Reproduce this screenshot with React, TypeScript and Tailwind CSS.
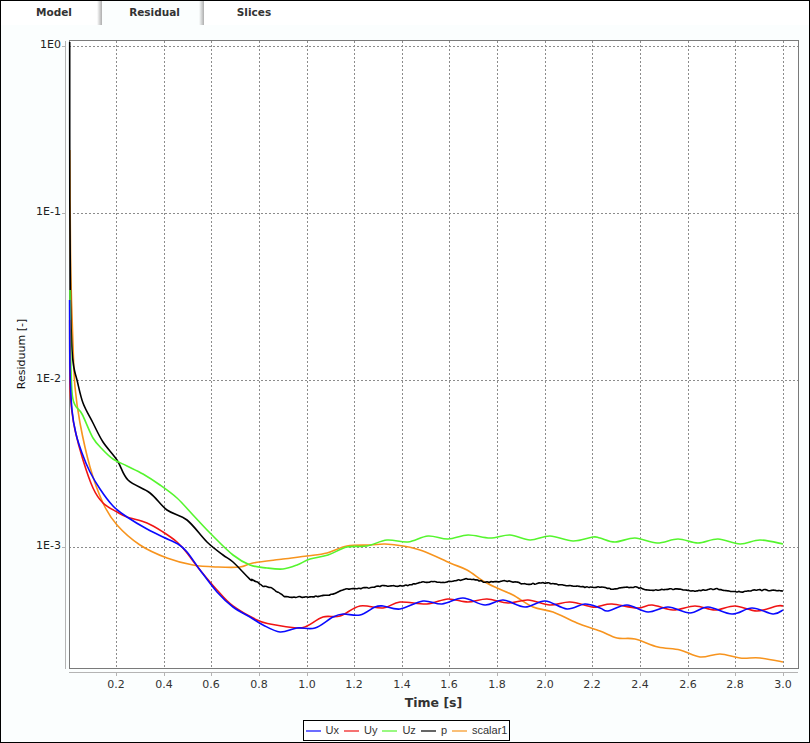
type Pt = [number, number];

// smooth line through the read-off points (catmull-rom to bezier)
function smooth(pts: Pt[]) {
  let d = `M${pts[0][0]} ${pts[0][1]}`;
  for (let i = 0; i < pts.length - 1; i++) {
    const p0 = pts[i - 1] || pts[i];
    const p1 = pts[i];
    const p2 = pts[i + 1];
    const p3 = pts[i + 2] || p2;
    const c1x = p1[0] + (p2[0] - p0[0]) / 6;
    const c1y = p1[1] + (p2[1] - p0[1]) / 6;
    const c2x = p2[0] - (p3[0] - p1[0]) / 6;
    const c2y = p2[1] - (p3[1] - p1[1]) / 6;
    d += `C${c1x.toFixed(1)} ${c1y.toFixed(1)} ${c2x.toFixed(1)} ${c2y.toFixed(1)} ${p2[0]} ${p2[1]}`;
  }
  return d;
}

// the p residual is noisy, so it gets a small fixed jitter
function noisy(pts: Pt[]) {
  const out: Pt[] = [];
  for (let i = 0; i < pts.length - 1; i++) {
    const [x0, y0] = pts[i];
    const [x1, y1] = pts[i + 1];
    if (x0 < 240) {
      out.push([x0, y0]);
      continue;
    }
    const n = Math.max(1, Math.round((x1 - x0) / 2));
    for (let k = 0; k < n; k++) {
      const t = k / n;
      const s = t * t * (3 - 2 * t);
      const j = Math.sin((x0 + k * 2) * 12.9898) * 43758.5453;
      out.push([+(x0 + (x1 - x0) * t).toFixed(1), +(y0 + (y1 - y0) * s + ((j - Math.floor(j)) - 0.5) * 1.1).toFixed(1)]);
    }
  }
  out.push(pts[pts.length - 1]);
  return out;
}

const ux: Pt[] = [[69.6, 300], [70, 370], [72, 410], [76, 434], [82, 453], [90, 472], [100, 489], [113, 506], [127, 517], [147, 529], [163, 537], [178, 544], [187, 552], [200, 570], [217, 592], [233, 607], [250, 617], [263, 625], [280, 632], [297, 628], [315, 628], [333, 617], [343, 614], [360, 615], [375, 607], [383, 606], [400, 609], [423, 601], [442, 604], [463, 598], [485, 605], [503, 600], [525, 607], [545, 601], [567, 609], [585, 604], [600, 608], [608, 611], [627, 605], [648, 612], [668, 607], [690, 613], [708, 607], [732, 614], [752, 608], [773, 614], [783, 610]];
const uy: Pt[] = [[69.7, 320], [70, 387], [72, 412], [75, 430], [83, 460], [93, 488], [103, 503], [117, 512], [127, 517], [147, 523], [163, 532], [177, 542], [187, 553], [200, 570], [217, 590], [233, 606], [257, 620], [270, 624], [297, 628], [307, 626], [323, 617], [340, 616], [360, 606], [383, 608], [400, 602], [427, 604], [448, 599], [468, 602], [487, 599], [508, 603], [528, 600], [550, 605], [570, 602], [592, 607], [600, 606], [612, 604], [637, 608], [652, 605], [673, 610], [695, 606], [715, 610], [735, 606], [757, 611], [777, 606], [783, 606]];
const uz: Pt[] = [[70, 290], [70.6, 350], [72, 392], [75, 405], [82, 414], [93, 438], [103, 450], [113, 459], [127, 466], [143, 474], [160, 485], [177, 498], [193, 515], [210, 533], [233, 555], [250, 565], [267, 568], [283, 569], [297, 565], [310, 559], [328, 555], [347, 547], [367, 546], [387, 540], [408, 542], [428, 536], [448, 539], [468, 535], [490, 538], [510, 535], [530, 540], [550, 536], [573, 541], [593, 537], [600, 538], [615, 542], [635, 538], [657, 543], [678, 539], [698, 543], [718, 539], [740, 544], [760, 540], [783, 544]];
const p: Pt[] = [[69.7, 42], [69.8, 200], [70.5, 300], [72, 350], [74, 368], [77, 380], [83, 403], [93, 423], [103, 442], [117, 460], [128, 480], [150, 493], [167, 510], [187, 520], [207, 542], [223, 555], [233, 562], [250, 579], [267, 587], [288, 597], [310, 597], [327, 595], [347, 589], [367, 588], [380, 586], [400, 586], [427, 582], [443, 582], [470, 579], [487, 582], [507, 581], [527, 584], [547, 583], [570, 586], [587, 587], [600, 587], [613, 589], [633, 587], [650, 590], [677, 589], [693, 591], [715, 589], [737, 592], [760, 590], [783, 591]];
const scalar1: Pt[] = [[69.8, 150], [70.5, 250], [71.5, 300], [73, 345], [75, 387], [80, 423], [90, 467], [103, 503], [117, 525], [140, 545], [167, 558], [193, 565], [217, 567], [240, 567], [253, 563], [283, 559], [307, 556], [327, 553], [347, 546], [370, 545], [385, 544], [403, 546], [423, 551], [450, 563], [467, 570], [483, 581], [497, 588], [513, 595], [533, 607], [553, 612], [577, 623], [600, 631], [617, 638], [635, 639], [658, 647], [680, 650], [700, 657], [720, 654], [740, 658], [760, 658], [783, 662]];

const series = [
  { name: "Ux", color: "#0a0aff", d: smooth(ux) },
  { name: "Uy", color: "#f01414", d: smooth(uy) },
  { name: "Uz", color: "#55f52e", d: smooth(uz) },
  { name: "p", color: "#000000", d: smooth(noisy(p)) },
  { name: "scalar1", color: "#f7941e", d: smooth(scalar1) },
];

const xTicks = ["0.2", "0.4", "0.6", "0.8", "1.0", "1.2", "1.4", "1.6", "1.8", "2.0", "2.2", "2.4", "2.6", "2.8", "3.0"];
const yTicks = [
  { label: "1E0", y: 46.5 },
  { label: "1E-1", y: 213.5 },
  { label: "1E-2", y: 380.5 },
  { label: "1E-3", y: 547.5 },
];

function Chart() {
  return (
    <svg width="808" height="690" viewBox="1 25 808 690" className="block font-['DejaVu_Sans',sans-serif]">
      <rect x="69" y="41" width="729" height="628" fill="#ffffff" />
      {xTicks.map((t, i) => {
        const x = Math.round(116 + 47.63 * i) + 0.5;
        return <line key={t} x1={x} y1="41" x2={x} y2="668" stroke="#8c8c8c" strokeDasharray="2 2" />;
      })}
      {yTicks.map((t) => (
        <line key={t.y} x1="69" y1={t.y} x2="798" y2={t.y} stroke="#8c8c8c" strokeDasharray="2 2" />
      ))}
      <rect x="69.5" y="40.5" width="729" height="628" fill="none" stroke="#7a7a7a" />
      {/* first series is drawn last, it sits on top in the reference */}
      {[...series].reverse().map((s) => (
        <path key={s.name} d={s.d} fill="none" stroke={s.color} strokeWidth="1.6" strokeLinejoin="round" />
      ))}
      <line x1="65.5" y1="41" x2="65.5" y2="669" stroke="#b4b4b4" />
      <line x1="69" y1="672.5" x2="798" y2="672.5" stroke="#b4b4b4" />
      {yTicks.map((t) => (
        <g key={t.label}>
          <line x1="62" y1={t.y} x2="65" y2={t.y} stroke="#b4b4b4" />
          <text x="61" y={t.y + 1} textAnchor="end" fontSize="11" fill="#222222">
            {t.label}
          </text>
        </g>
      ))}
      {xTicks.map((t, i) => {
        const x = Math.round(116 + 47.63 * i);
        return (
          <g key={t}>
            <line x1={x + 0.5} y1="673" x2={x + 0.5} y2="676" stroke="#b4b4b4" />
            <text x={x} y="688" textAnchor="middle" fontSize="11" fill="#333333">
              {t}
            </text>
          </g>
        );
      })}
      <text x="433.5" y="707" textAnchor="middle" fontSize="12.5" fontWeight="bold" fill="#333333">
        Time [s]
      </text>
      <text transform="translate(25 354) rotate(-90)" textAnchor="middle" fontSize="11" fill="#111111">
        Residuum [-]
      </text>
    </svg>
  );
}

function Legend() {
  return (
    <div className="mt-[5px] flex justify-center pl-[3px]">
      <div className="flex h-[21px] items-center gap-[5px] border border-black bg-white px-[2px] font-['Liberation_Sans',sans-serif] text-[11px] text-[#333333]">
        {series.map((s) => (
          <div key={s.name} className="flex items-center gap-[5px]">
            <svg width="15" height="2" className="block">
              <line x1="0" y1="1" x2="15" y2="1" stroke={s.color} strokeWidth="1.2" />
            </svg>
            <span>{s.name}</span>
          </div>
        ))}
      </div>
    </div>
  );
}

export default function App() {
  return (
    <div className="flex h-[743px] w-[810px] flex-col overflow-hidden border border-black bg-white font-['DejaVu_Sans',sans-serif]">
      <div className="flex h-[24px] shrink-0 text-[10.5px] font-bold text-[#333333]">
        <div className="flex w-[101px] bg-white">
          <div className="flex flex-1 items-center justify-center pl-[10px]">Model</div>
          <div className="w-[5px] bg-linear-to-r from-white to-[#aeaeae]" />
        </div>
        <div className="flex w-[102px] bg-[#fbfefe]">
          <div className="flex flex-1 items-center justify-center pl-[8px]">Residual</div>
          <div className="w-[5px] bg-linear-to-r from-[#fbfefe] to-[#aeaeae]" />
        </div>
        <div className="flex w-[100px] items-center justify-center bg-white">Slices</div>
      </div>
      <div className="flex flex-1 flex-col bg-[#fbfefe]">
        <Chart />
        <Legend />
      </div>
    </div>
  );
}
